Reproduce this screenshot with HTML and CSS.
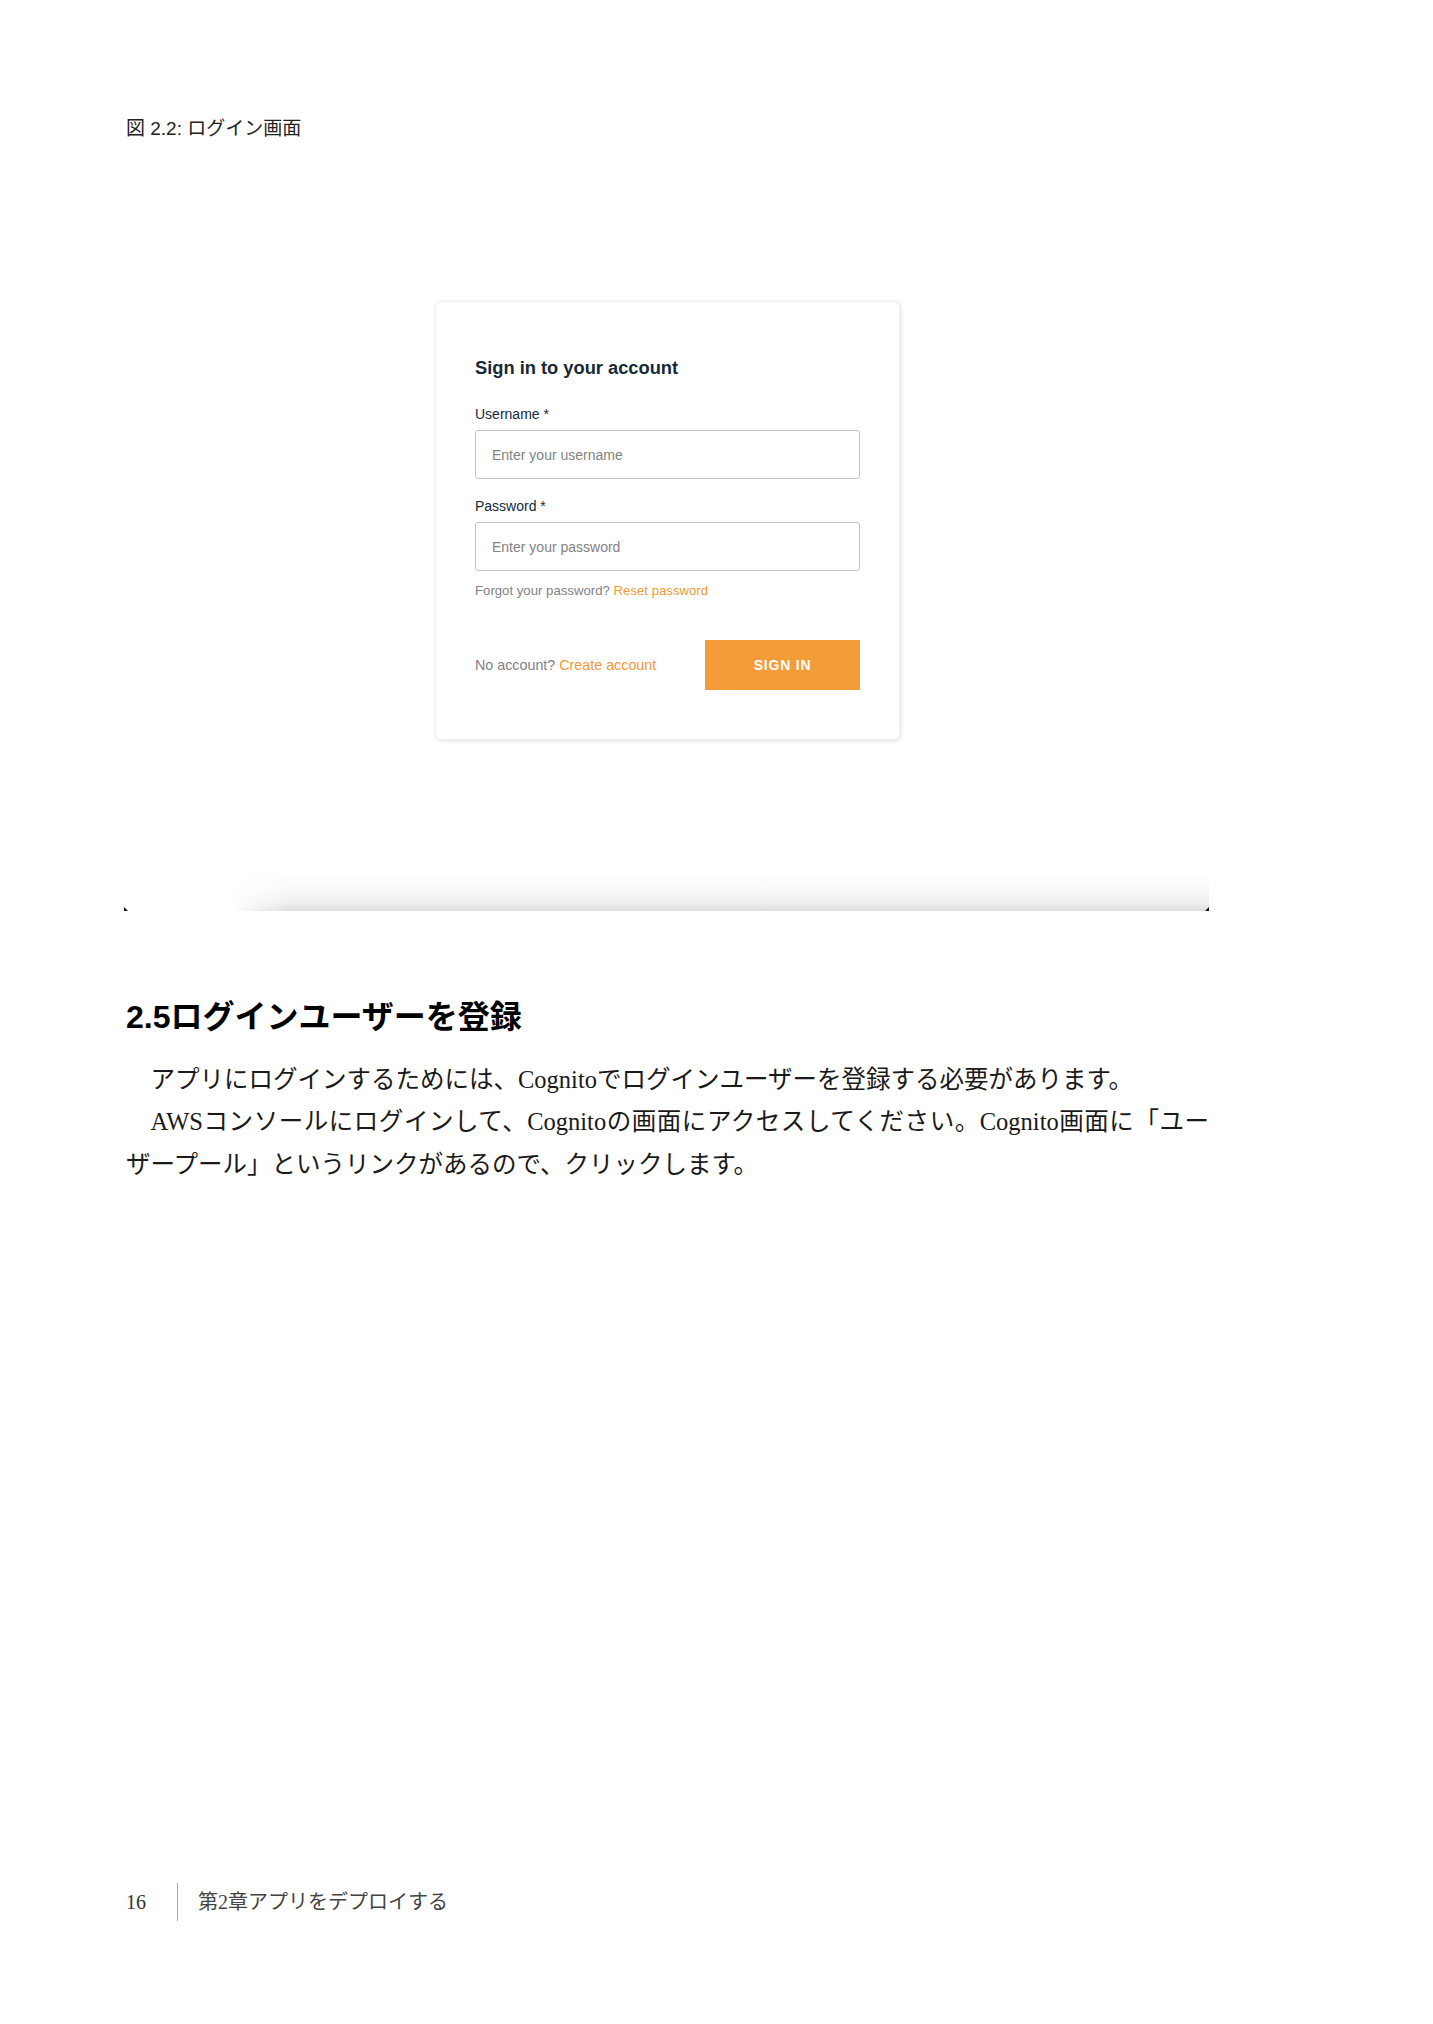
FILE: index.html
```html
<!DOCTYPE html>
<html lang="ja">
<head>
  <meta charset="UTF-8">
  <meta name="viewport" content="width=device-width, initial-scale=1.0">
  <title>第2章 アプリをデプロイする</title>
  <link rel="stylesheet" href="styles.css">
</head>
<body>
  <div class="page">
    <p class="caption">図 2.2: ログイン画面</p>

    <div class="figure">
      <div class="card">
        <h2 class="card-title">Sign in to your account</h2>

        <label class="field-label" for="username">Username *</label>
        <input class="field-input" id="username" type="text" placeholder="Enter your username">

        <label class="field-label second" for="password">Password *</label>
        <input class="field-input" id="password" type="password" placeholder="Enter your password">

        <p class="hint">Forgot your password? <a href="#">Reset password</a></p>

        <div class="card-footer">
          <span class="hint-lg">No account? <a href="#">Create account</a></span>
          <button class="signin-btn" type="button">Sign In</button>
        </div>
      </div>

      <div class="figure-shadow">
        <span class="corner left"></span>
        <span class="corner right"></span>
      </div>
    </div>

    <h2 class="section-title">2.5ログインユーザーを登録</h2>

    <div class="body-text">
      <p>アプリにログインするためには、Cognitoでログインユーザーを登録する必要があります。</p>
      <p>AWSコンソールにログインして、Cognitoの画面にアクセスしてください。Cognito画面に「ユーザープール」というリンクがあるので、クリックします。</p>
    </div>

    <div class="page-footer">
      <span class="page-no">16</span>
      <span class="footer-rule"></span>
      <span class="chapter">第2章アプリをデプロイする</span>
    </div>
  </div>
</body>
</html>
```

FILE: styles.css
```css
* {
  margin: 0;
  padding: 0;
  box-sizing: border-box;
}

body {
  background: #fff;
  color: #1a1a1a;
  font-family: "Liberation Sans", "Noto Sans CJK JP", sans-serif;
}

.page {
  width: 1433px;
  min-height: 2024px;
  padding: 116px 0 103px 126px;
  display: flex;
  flex-direction: column;
}

.page > * {
  width: 1083px;
}

/* 図のキャプション */
.caption {
  font-size: 19px;
  line-height: 25px;
  color: #222;
}

.figure {
  padding-top: 160px;
}

/* ログインカード */
.card {
  width: 465px;
  margin: 0 auto;
  padding: 54px 39px 49px;
  background: #fff;
  border: 1px solid #f0f0f0;
  border-radius: 6px;
  box-shadow: 1px 1px 4px rgba(0, 0, 0, 0.12);
  font-family: "Liberation Sans", Arial, sans-serif;
  display: flex;
  flex-direction: column;
}

.card-title {
  font-size: 18.3px;
  line-height: 24px;
  font-weight: 700;
  color: #152939;
  margin-bottom: 24px;
}

.field-label {
  display: block;
  font-size: 14px;
  line-height: 20px;
  color: #152939;
  margin-bottom: 6px;
}

.field-label.second {
  margin-top: 17px;
}

.field-input {
  width: 100%;
  height: 49px;
  padding: 0 16px;
  border: 1px solid #c4c4c4;
  border-radius: 3px;
  font-family: inherit;
  font-size: 14px;
  color: #152939;
  outline: none;
}

.field-input::placeholder {
  color: #828282;
}

.hint {
  margin-top: 10.5px;
  font-size: 13.2px;
  line-height: 18px;
  color: #828282;
}

.hint a,
.hint-lg a {
  color: #f09a36;
  text-decoration: none;
}

.card-footer {
  margin-top: 40.5px;
  display: flex;
  align-items: center;
  justify-content: space-between;
}

.hint-lg {
  font-size: 14.3px;
  line-height: 20px;
  color: #828282;
}

.signin-btn {
  width: 155px;
  height: 50px;
  border: none;
  background: #f39c38;
  color: #fff;
  font-family: inherit;
  font-size: 14px;
  font-weight: 700;
  letter-spacing: 0.8px;
  text-transform: uppercase;
  cursor: pointer;
}

/* 画像下端の影 */
.figure-shadow {
  margin-top: 133px;
  height: 38px;
  display: flex;
  justify-content: space-between;
  align-items: flex-end;
  background:
    linear-gradient(to right, #fff 105px, rgba(255, 255, 255, 0) 165px),
    linear-gradient(to bottom, #fff 0%, #f9f9f9 45%, #eeeeee 80%, #dddddd 100%);
}

.corner {
  width: 0;
  height: 0;
  border-bottom: 4px solid #111;
}

.corner.left {
  border-right: 4px solid transparent;
  margin-left: -2px;
}

.corner.right {
  border-left: 4px solid transparent;
}

/* 本文 */
.section-title {
  margin-top: 83.5px;
  font-size: 32px;
  line-height: 44px;
  font-weight: 700;
  color: #000;
}

.body-text {
  margin-top: 20.2px;
  font-family: "Liberation Serif", "Noto Sans CJK JP", serif;
  font-size: 24.5px;
  line-height: 42.6px;
  color: #1a1a1a;
}

.body-text p {
  text-indent: 1em;
  text-align: justify;
}

/* ページフッター */
.page-footer {
  margin-top: auto;
  display: flex;
  align-items: center;
  font-family: "Liberation Serif", "Noto Sans CJK JP", serif;
  font-size: 20px;
  line-height: 28px;
  color: #444;
}

.page-no {
  width: 51px;
  color: #333;
}

.footer-rule {
  width: 1px;
  height: 38px;
  background: #aaa;
  margin-right: 20px;
}
```
